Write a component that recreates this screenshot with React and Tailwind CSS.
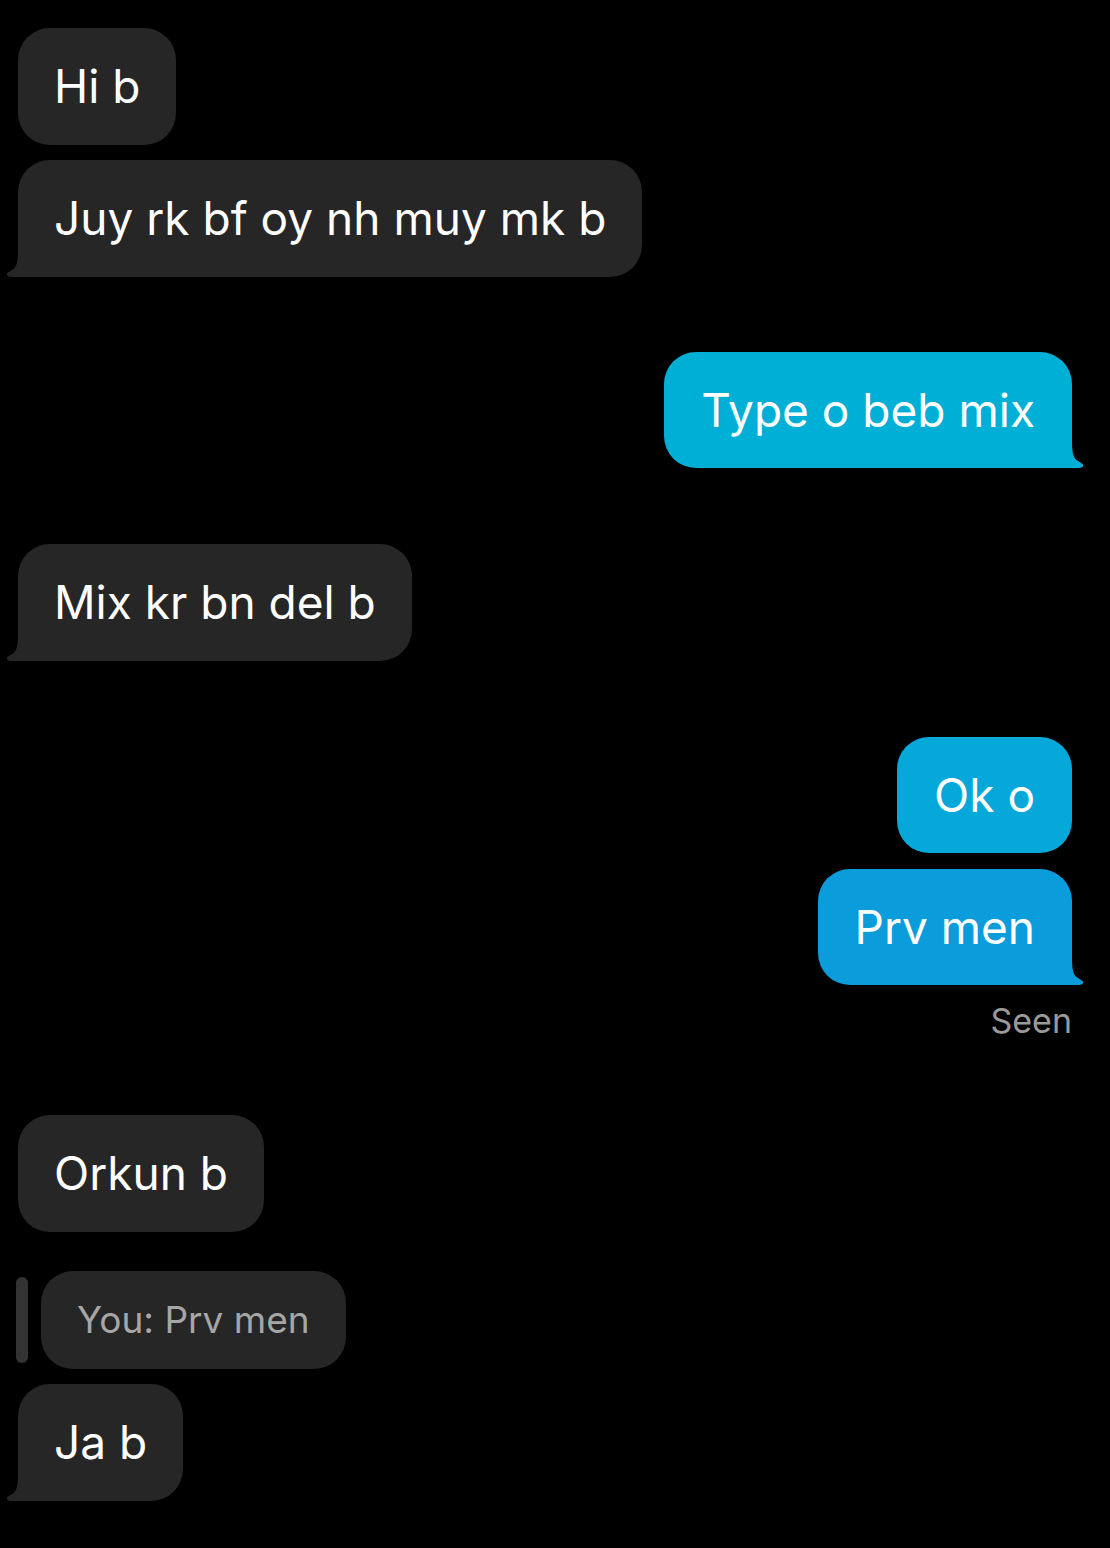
const font = { fontFamily: "Inter, 'Liberation Sans', sans-serif" };

function Tail({ color, side }) {
  return (
    <svg
      width="30"
      height="32"
      viewBox="0 0 30 32"
      className={
        side === "left"
          ? "absolute bottom-0 left-[-12px]"
          : "absolute bottom-0 right-[-12px] scale-x-[-1]"
      }
    >
      <path
        d="M12 0 L30 0 L30 32 L6 32 C2.5 32 0 30.5 1 28.5 C2 27 5 26 7.5 24 C11 21 12 16 12 4 Z"
        fill={color}
      />
    </svg>
  );
}

function Incoming({ text, tail }) {
  return (
    <div className="flex">
      <div
        className={
          "relative bg-[#262626] text-white text-[46px] leading-[59px] py-[29px] px-[36px] rounded-[32px] " +
          (tail ? "rounded-bl-[8px]" : "")
        }
      >
        {text}
        {tail && <Tail color="#262626" side="left" />}
      </div>
    </div>
  );
}

function Outgoing({ text, tail, color }) {
  return (
    <div className="flex justify-end">
      <div
        className={
          "relative text-white text-[46px] leading-[58px] py-[29px] px-[37px] rounded-[32px] " +
          (tail ? "rounded-br-[8px]" : "")
        }
        style={{ backgroundColor: color }}
      >
        {text}
        {tail && <Tail color={color} side="right" />}
      </div>
    </div>
  );
}

export default function App() {
  return (
    <div className="w-[1110px] min-h-[1548px] bg-black pt-[28px] pl-[18px] pr-[38px]" style={font}>
      <div className="flex flex-col gap-[15px]">
        <Incoming text="Hi b" />
        <Incoming text="Juy rk bf oy nh muy mk b" tail />
      </div>

      <div className="mt-[75px]">
        <Outgoing text="Type o beb mix" tail color="#00AFD6" />
      </div>

      <div className="mt-[76px]">
        <Incoming text="Mix kr bn del b" tail />
      </div>

      <div className="mt-[76px] flex flex-col gap-[16px]">
        <Outgoing text="Ok o" color="#05A8D9" />
        <Outgoing text="Prv men" tail color="#0A9CDB" />
      </div>
      <div className="flex justify-end mt-[16px] text-[34px] leading-[40px] text-[#9a9a9a]">Seen</div>

      <div className="mt-[74px]">
        <Incoming text="Orkun b" />
      </div>

      <div className="mt-[39px] flex items-center gap-[13px] ml-[-2px]">
        <div className="w-[12px] h-[86px] rounded-full bg-[#333333]" />
        <div className="bg-[#262626] text-[#a6a6a6] text-[37px] leading-[42px] py-[28px] px-[36px] rounded-[32px]">
          You: Prv men
        </div>
      </div>

      <div className="mt-[15px]">
        <Incoming text="Ja b" tail />
      </div>
    </div>
  );
}
